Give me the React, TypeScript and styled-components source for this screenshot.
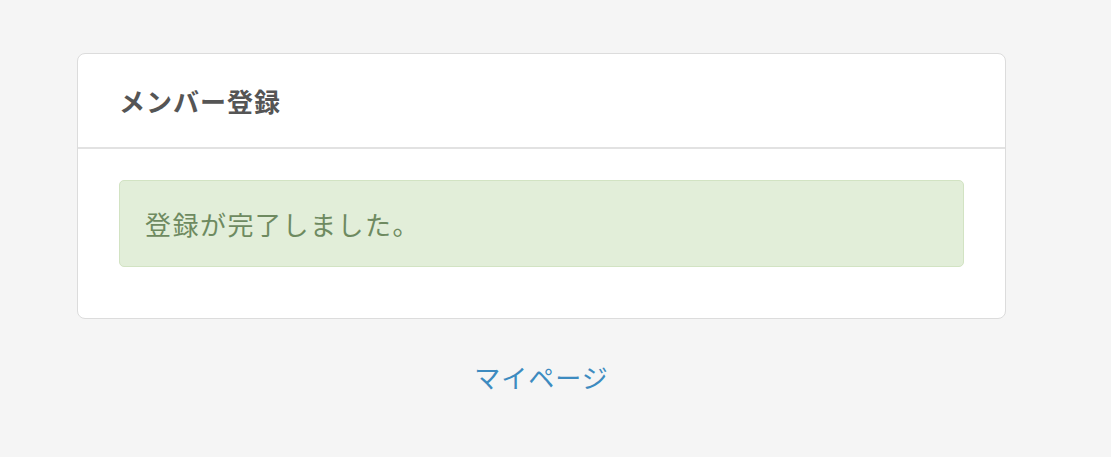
import React from "react";
import styled, { createGlobalStyle } from "styled-components";

const Global = createGlobalStyle`
  html, body { margin: 0; padding: 0; background: #f5f5f5; }
  body { font-family: "Noto Sans CJK JP", "Noto Sans", sans-serif; }
`;

const Page = styled.div`
  padding: 53px 0 0 77px;
  width: 929px;
`;

const Card = styled.section`
  background: #fff;
  border: 1px solid #dcdcdc;
  border-radius: 8px;
`;

const CardHeader = styled.header`
  height: 93px;
  display: flex;
  align-items: center;
  padding: 0 41px;
  border-bottom: 2px solid #e2e2e2;
`;

const Title = styled.h1`
  margin: 0;
  font-size: 26px;
  font-weight: 700;
  color: #555;
  letter-spacing: 1px;
`;

const CardBody = styled.div`
  padding: 31px 41px 51px;
`;

const Alert = styled.div`
  height: 87px;
  box-sizing: border-box;
  display: flex;
  align-items: center;
  padding: 0 25px;
  background: #e2eed9;
  border: 1px solid #d2e3c3;
  border-radius: 5px;
  color: #6e8a60;
  font-size: 26px;
  letter-spacing: 1.5px;
`;

const LinkRow = styled.div`
  display: flex;
  justify-content: center;
  margin-top: 39px;
`;

const PageLink = styled.a`
  color: #3d8bc0;
  font-size: 26px;
  letter-spacing: 1px;
  text-decoration: none;
`;

export default function App() {
  return (
    <>
      <Global />
      <Page>
        <Card>
          <CardHeader>
            <Title>メンバー登録</Title>
          </CardHeader>
          <CardBody>
            <Alert>登録が完了しました。</Alert>
          </CardBody>
        </Card>
        <LinkRow>
          <PageLink href="#">マイページ</PageLink>
        </LinkRow>
      </Page>
    </>
  );
}
